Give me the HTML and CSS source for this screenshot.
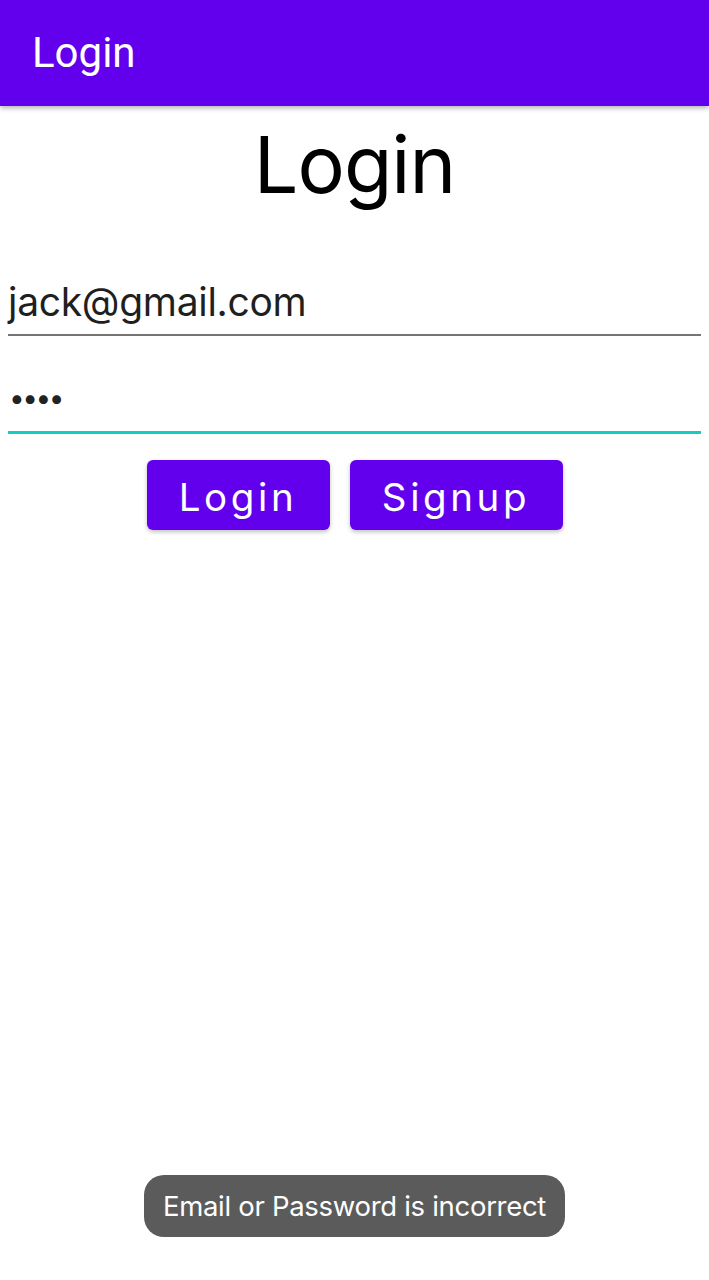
FILE: index.html
```html
<!DOCTYPE html>
<html>
<head>
<meta charset="utf-8">
<link rel="stylesheet" href="styles.css">
</head>
<body>
<div class="appbar"><span class="appbar-title">Login</span></div>
<main class="content">
  <h1 class="heading">Login</h1>
  <div class="field field-email"><span class="field-text">jack@gmail.com</span></div>
  <div class="field field-pass focused"><span class="field-text dots">&#8226;&#8226;&#8226;&#8226;</span></div>
  <div class="buttons">
    <button class="btn btn-login">Login</button>
    <button class="btn btn-signup">Signup</button>
  </div>
</main>
<div class="toast">Email or Password is incorrect</div>
</body>
</html>
```
FILE: styles.css
```css
html, body {
  margin: 0;
  padding: 0;
  background: #ffffff;
  width: 709px;
  height: 1280px;
  overflow: hidden;
}
body {
  position: relative;
  font-family: Roboto, "Noto Sans", sans-serif;
}
.appbar {
  height: 106px;
  background: #6200ee;
  box-shadow: 0 2px 5px rgba(0,0,0,0.3);
  display: flex;
  align-items: center;
  padding-left: 32px;
  box-sizing: border-box;
}
.appbar-title {
  color: #ffffff;
  font-size: 42px;
  font-family: Roboto, sans-serif;
  padding-bottom: 2px;
}
.content {
  padding: 0 8px;
  display: flex;
  flex-direction: column;
}
.heading {
  margin: 8px 0 0 0;
  text-align: center;
  font-weight: 400;
  font-size: 79px;
  line-height: 100px;
  color: #000;
  font-family: Inter, Roboto, sans-serif;
  letter-spacing: -1px;
}
.field {
  display: flex;
  align-items: flex-end;
  box-sizing: border-box;
}
.field-email {
  margin-top: 58px;
  height: 64px;
  border-bottom: 2px solid #757575;
}
.field-text {
  font-family: Inter, Roboto, sans-serif;
  font-size: 39px;
  color: #1f1f1f;
  line-height: 48px;
  padding-bottom: 8px;
  letter-spacing: -0.3px;
}
.field-pass {
  height: 98px;
  border-bottom: 3px solid #16cbc0;
}
.dots {
  font-size: 28px;
  letter-spacing: -2.5px;
  padding-bottom: 9px;
  padding-left: 1px;
  color: #222;
}
.buttons {
  margin-top: 26px;
  display: flex;
  justify-content: center;
  gap: 20px;
}
.btn {
  height: 70px;
  border: none;
  border-radius: 6px;
  background: #6200ee;
  color: #ffffff;
  font-family: Inter, Roboto, sans-serif;
  font-size: 38.5px;
  letter-spacing: 3.6px;
  box-shadow: 0 2px 4px rgba(0,0,0,0.25);
  padding: 4px 0 0 0;
}
.btn-login { width: 183px; }
.btn-signup { width: 213px; }
.toast {
  position: absolute;
  left: 144px;
  top: 1175px;
  width: 421px;
  height: 62px;
  box-sizing: border-box;
  border-radius: 20px;
  background: #5b5b5b;
  color: #ffffff;
  font-family: Inter, Roboto, sans-serif;
  font-size: 27.5px;
  display: flex;
  align-items: center;
  justify-content: center;
  letter-spacing: -0.3px;
}
```
